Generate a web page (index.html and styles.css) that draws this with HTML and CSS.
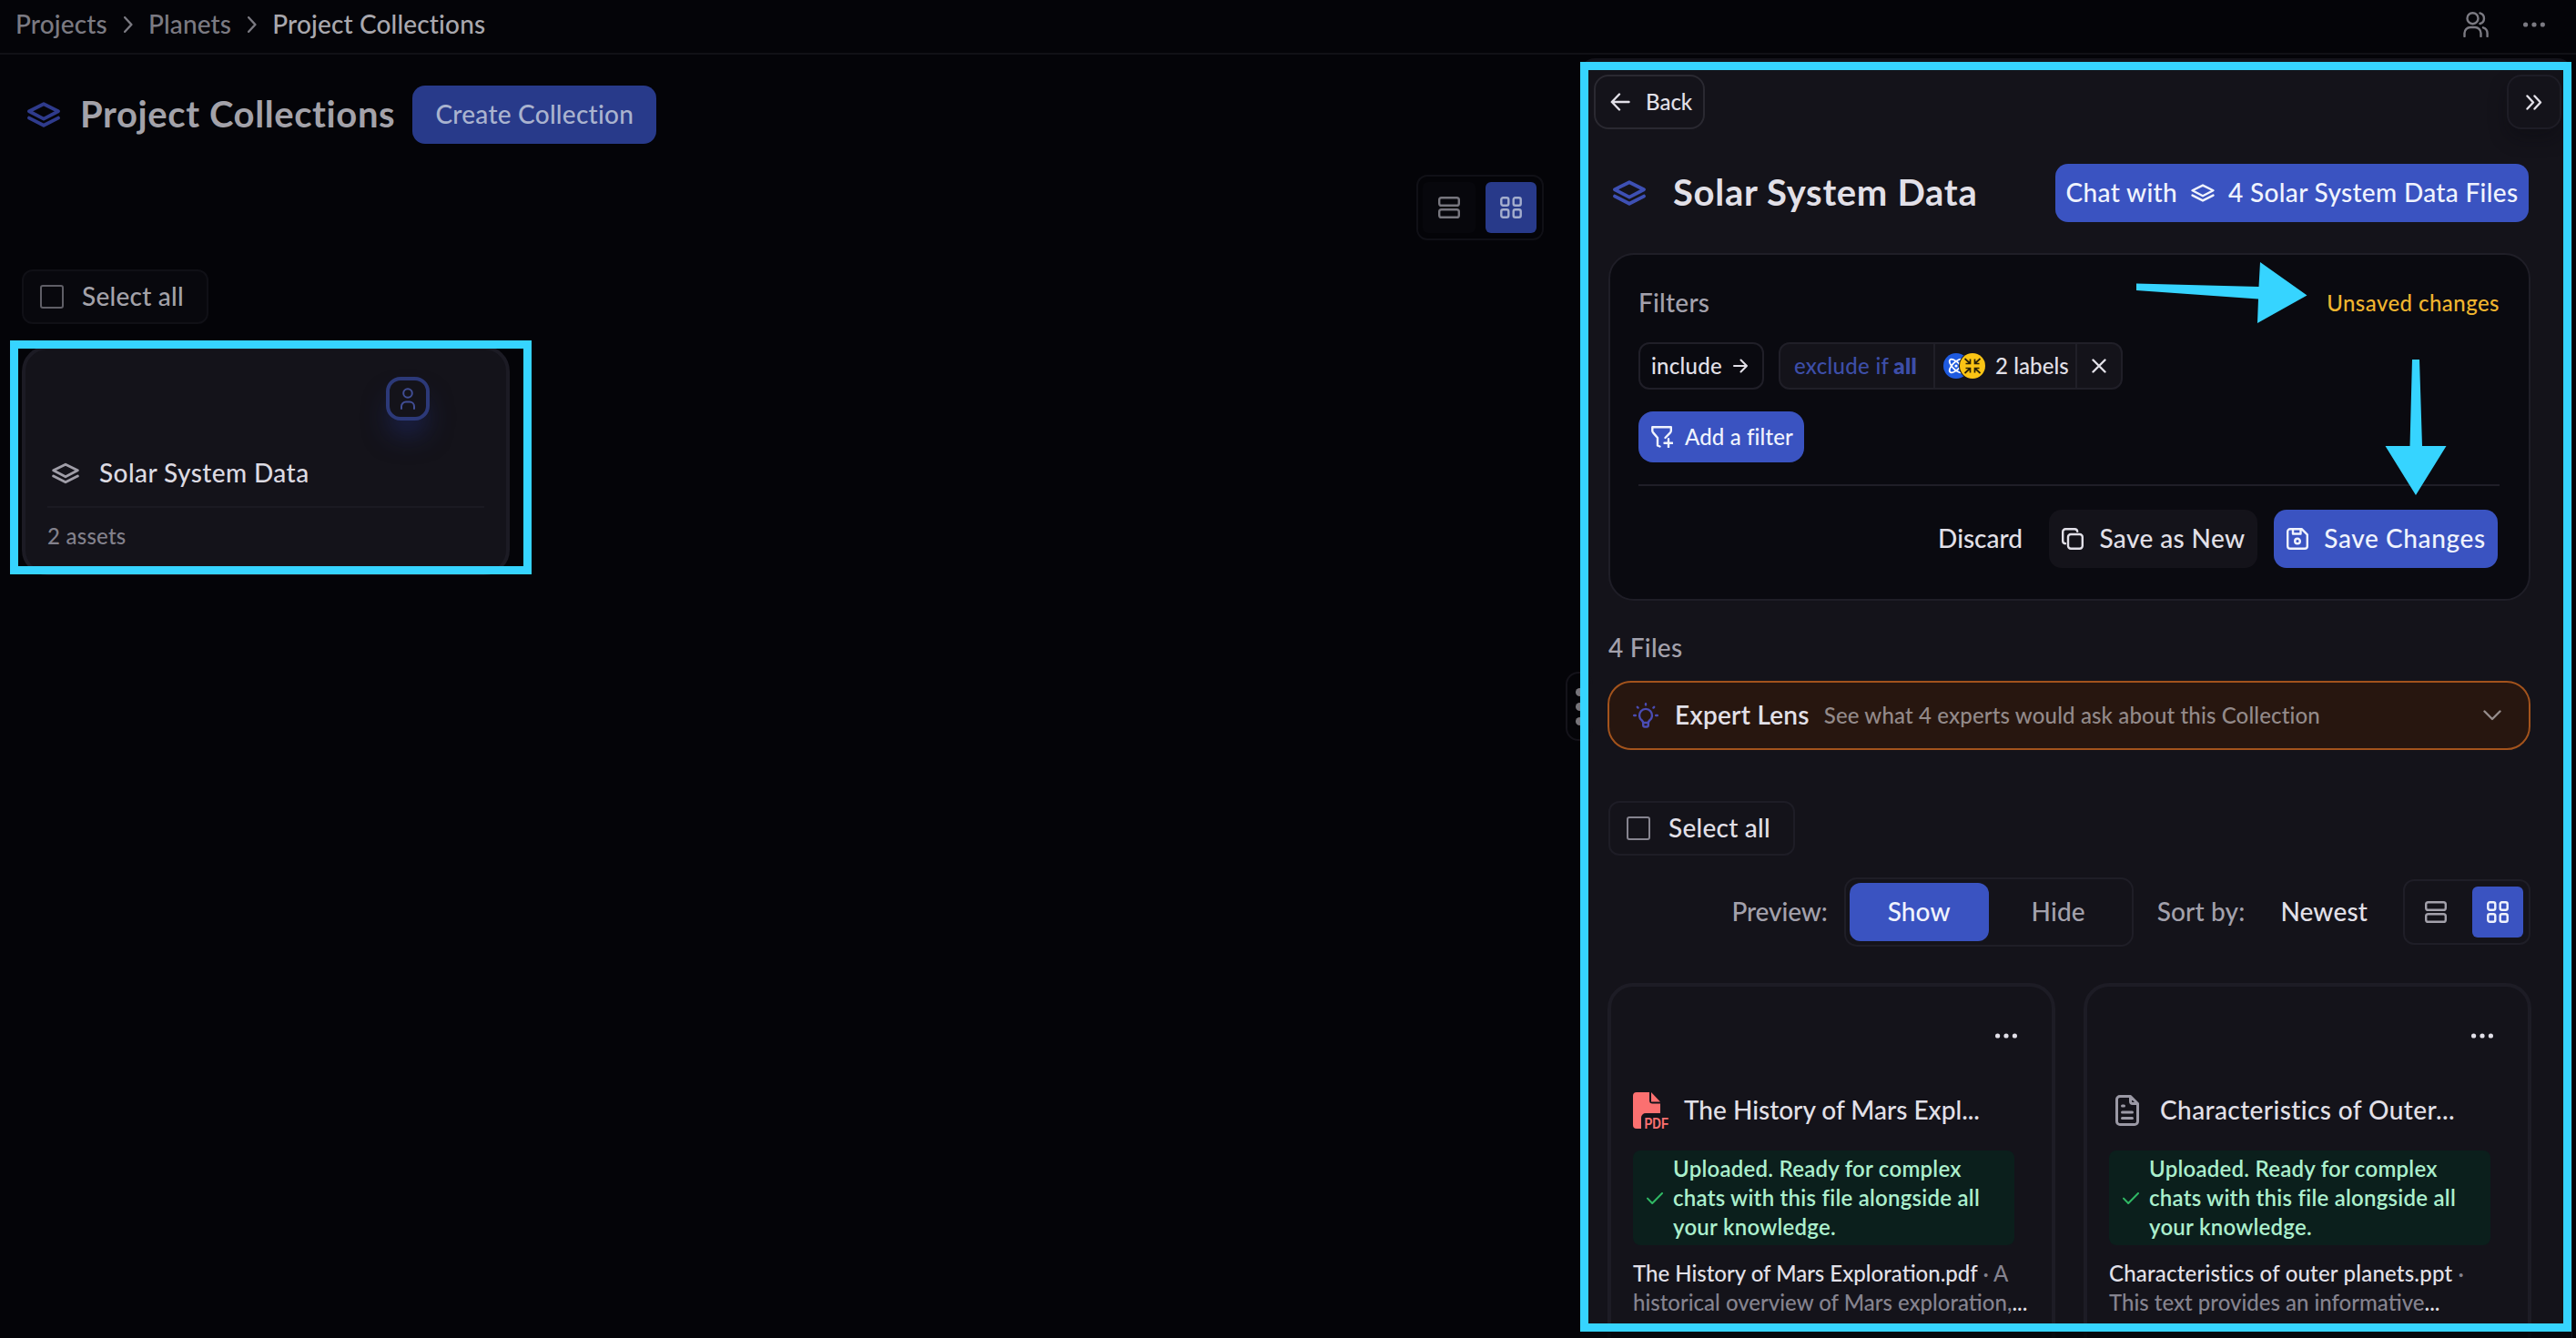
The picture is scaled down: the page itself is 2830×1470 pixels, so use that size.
FILE: index.html
```html
<!DOCTYPE html>
<html lang="en">
  <head>
    <meta charset="UTF-8" />
    <meta name="viewport" content="width=device-width, initial-scale=1.0" />
    <title>Project Collections</title>
    <link rel="stylesheet" href="styles.css">
  </head>
  <body>
    <!-- shared icons -->
    <svg class="sprite">
      <symbol id="layers" viewBox="0 0 36 28"><path d="M18 2.2 34 10.2 18 18.6 2 10.2z" /><path d="M2 17.6 18 25.8 34 17.6" /></symbol>
      <symbol id="rows" viewBox="0 0 24 24"><rect x="1.2" y="1.2" width="21.6" height="8.6" rx="2.4" /><rect x="1.2" y="14.2" width="21.6" height="8.6" rx="2.4" /></symbol>
      <symbol id="grid" viewBox="0 0 24 24"><rect x="1.3" y="1.3" width="8" height="8.4" rx="2" /><rect x="14.7" y="1.3" width="8" height="8.4" rx="2" /><rect x="1.3" y="14.3" width="8" height="8.4" rx="2" /><rect x="14.7" y="14.3" width="8" height="8.4" rx="2" /></symbol>
      <symbol id="dots" viewBox="0 0 24 6"><circle cx="2.6" cy="3" r="2.6" /><circle cx="12" cy="3" r="2.6" /><circle cx="21.4" cy="3" r="2.6" /></symbol>
      <symbol id="check" viewBox="0 0 18 13"><path d="M1 6.6 6.2 12 17 1" /></symbol>
      <symbol id="chevron" viewBox="0 0 10 18"><path d="M1.2 1.2 8.4 9 1.2 16.8" /></symbol>
    </svg>

    <header class="topbar">
      <nav class="crumbs">
        <span>Projects</span>
        <svg class="crumb-sep"><use href="#chevron" /></svg>
        <span>Planets</span>
        <svg class="crumb-sep"><use href="#chevron" /></svg>
        <span class="current">Project Collections</span>
      </nav>
      <svg class="icon users" viewBox="0 0 28 28"><circle cx="10.5" cy="7.2" r="6" /><path d="M1.5 27v-3.5a6.5 6.5 0 0 1 6.5-6.5h5a6.5 6.5 0 0 1 6.5 6.5V27M18.5 1.4a6 6 0 0 1 0 11.6M22 17.3a6.5 6.5 0 0 1 4.6 6.2V27" /></svg>
      <svg class="dots"><use href="#dots" /></svg>
    </header>

    <main class="content">
      <section class="collections">
        <div class="page-head">
          <svg class="icon layers-lg"><use href="#layers" /></svg>
          <h1>Project Collections</h1>
          <button class="btn create"><span>Create Collection</span></button>
        </div>
        <div class="view-toggle">
          <div class="view"><svg class="icon"><use href="#rows" /></svg></div>
          <div class="view active"><svg class="icon"><use href="#grid" /></svg></div>
        </div>
        <div class="select-all"><i class="checkbox"></i><span>Select all</span></div>
        <div class="collection-card">
          <div class="owner"><svg class="icon" viewBox="0 0 16 24"><circle cx="8" cy="6" r="4.8" /><path d="M1 23v-2.5a5 5 0 0 1 5-5h4a5 5 0 0 1 5 5V23" /></svg></div>
          <div class="collection-name"><svg class="icon"><use href="#layers" /></svg><span>Solar System Data</span></div>
          <div class="assets">2 assets</div>
        </div>
        <div class="drag-handle"><i></i><i></i><i></i></div>
      </section>

      <aside class="panel">
        <div class="panel-nav">
          <button class="back">
            <svg class="icon" viewBox="0 0 22 20"><path d="M20.5 10H2M10 1.5 1.8 10 10 18.5" /></svg>
            <span>Back</span>
          </button>
          <button class="collapse"><svg class="icon" viewBox="0 0 18 17"><path d="M1.5 1.5 8 8.5 1.5 15.5M9.5 1.5 16 8.5 9.5 15.5" /></svg></button>
        </div>

        <div class="panel-head">
          <svg class="icon layers-lg"><use href="#layers" /></svg>
          <h2>Solar System Data</h2>
          <button class="btn chat"><span>Chat with</span><svg class="icon"><use href="#layers" /></svg><span>4 Solar System Data Files</span></button>
        </div>

        <div class="filters">
          <div class="filters-head"><span class="label">Filters</span><span class="unsaved">Unsaved changes</span></div>
          <div class="chips">
            <div class="chip include"><span>include</span><svg class="icon" viewBox="0 0 16 16"><path d="M1 8h14M8.5 1.5 15 8 8.5 14.5" /></svg></div>
            <div class="chip exclude">
              <div class="rule"><span>exclude if</span> <b>all</b></div>
              <div class="labels">
                <svg class="badges" viewBox="0 0 46 28">
                  <circle cx="14" cy="14" r="14" fill="#1f5be0" />
                  <g fill="none" stroke="#fff" stroke-width="1.8"><ellipse cx="14" cy="14" rx="9.5" ry="4" transform="rotate(45 14 14)" /><ellipse cx="14" cy="14" rx="9.5" ry="4" transform="rotate(-45 14 14)" /></g>
                  <circle cx="14" cy="14" r="1.6" fill="#fff" />
                  <circle cx="32" cy="14" r="15" fill="#14131a" />
                  <circle cx="32" cy="14" r="14" fill="#fac415" />
                  <path d="M23.5 6l6 5.5M29.5 6.5v5h-5M40.5 6l-6 5.5M34.5 6.5v5h5M23.5 22l6-5.5M29.5 21.5v-5h-5M40.5 22l-6-5.5M34.5 21.5v-5h5" fill="none" stroke="#2a2208" stroke-width="1.7" />
                </svg>
                <span>2 labels</span>
              </div>
              <div class="remove"><svg class="icon" viewBox="0 0 16 16"><path d="M1.5 1.5l13 13M14.5 1.5l-13 13" /></svg></div>
            </div>
          </div>
          <button class="btn add-filter">
            <svg class="icon" viewBox="0 0 24 24"><path d="M9.5 22.5 7 21.5V13L2.2 7.4A3 3 0 0 1 1.3 5.3V1.3h20.5v3.9a3 3 0 0 1-.9 2.1L15.5 13M14.5 18.8h9M19 14.3v9" /></svg>
            <span>Add a filter</span>
          </button>
          <div class="filters-actions">
            <span class="discard">Discard</span>
            <button class="btn save-new">
              <svg class="icon" viewBox="0 0 24 24"><rect x="7" y="7" width="15.8" height="15.8" rx="3" /><path d="M4 17.2a3 3 0 0 1-2.8-3V4.2a3 3 0 0 1 3-3h10a3 3 0 0 1 3 2.6" /></svg>
              <span>Save as New</span>
            </button>
            <button class="btn save">
              <svg class="icon" viewBox="0 0 24 24"><path d="M4 1.2h12.6l6.2 6.2V20a2.8 2.8 0 0 1-2.8 2.8H4A2.8 2.8 0 0 1 1.2 20V4A2.8 2.8 0 0 1 4 1.2zM7 1.2V6.5h8.5V1.2" /><circle cx="12" cy="14.5" r="2.8" /></svg>
              <span>Save Changes</span>
            </button>
          </div>
        </div>

        <div class="file-count">4 Files</div>

        <div class="expert">
          <svg class="icon bulb" viewBox="0 0 28 28"><path d="M9.8 19.5a7 7 0 1 1 8.4 0c-1 .9-1.4 2-1.4 3.2v2.2a1.6 1.6 0 0 1-1.6 1.6h-2.4a1.6 1.6 0 0 1-1.6-1.6v-2.2c0-1.2-.4-2.3-1.4-3.2zM11 22h6" /><path d="M1.2 14h1.6M25.2 14h1.6M14 1.2v1.2M4.8 4.8l.8.8M23.2 4.8l-.8.8" /></svg>
          <span class="expert-name">Expert Lens</span>
          <span class="expert-hint">See what 4 experts would ask about this Collection</span>
          <svg class="icon down" viewBox="0 0 20 12"><path d="M1.5 1.5 10 10 18.5 1.5" /></svg>
        </div>

        <div class="select-all"><i class="checkbox"></i><span>Select all</span></div>

        <div class="toolbar">
          <span class="preview-label">Preview:</span>
          <div class="preview"><span class="on">Show</span><span>Hide</span></div>
          <span class="sort-label">Sort by:</span>
          <span class="sort">Newest</span>
          <div class="view-toggle">
            <div class="view"><svg class="icon"><use href="#rows" /></svg></div>
            <div class="view active"><svg class="icon"><use href="#grid" /></svg></div>
          </div>
        </div>

        <div class="files">
          <div class="file">
            <svg class="dots"><use href="#dots" /></svg>
            <div class="file-name mars">
              <svg class="pdf" viewBox="0 0 40 40">
                <path d="M4 0h14v9a3.5 3.5 0 0 0 3.5 3.5H30V23H14a5 5 0 0 0-5 5v12H4a4 4 0 0 1-4-4V4a4 4 0 0 1 4-4zM20 0l10 10.5h-10z" />
                <text x="12.5" y="39.5" textLength="26.5" lengthAdjust="spacingAndGlyphs">PDF</text>
              </svg>
              <span>The History of Mars Expl...</span>
            </div>
            <div class="status">
              <svg class="icon"><use href="#check" /></svg>
              <p>Uploaded. Ready for complex<br>chats with this file alongside all<br>your knowledge.</p>
            </div>
            <p class="about"><span>The History of Mars Exploration.pdf</span> <em>· A</em><br><em>historical overview of Mars exploration,</em>...</p>
          </div>
          <div class="file">
            <svg class="dots"><use href="#dots" /></svg>
            <div class="file-name">
              <svg class="icon doc" viewBox="0 0 26 34"><path d="M5 1.5h11.5l8 8V29a3.5 3.5 0 0 1-3.5 3.5H5A3.5 3.5 0 0 1 1.5 29V5A3.5 3.5 0 0 1 5 1.5zM16.5 1.5V7a2.5 2.5 0 0 0 2.5 2.5h5.5M7.5 12h2M7.5 19h11M7.5 25.5h11" /></svg>
              <span>Characteristics of Outer...</span>
            </div>
            <div class="status">
              <svg class="icon"><use href="#check" /></svg>
              <p>Uploaded. Ready for complex<br>chats with this file alongside all<br>your knowledge.</p>
            </div>
            <p class="about"><span class="wide">Characteristics of outer planets.ppt</span> <em>·</em><br><em>This text provides an informative</em>...</p>
          </div>
        </div>
      </aside>
    </main>

    <!-- callouts drawn over the page -->
    <div class="frame frame-card"></div>
    <div class="frame frame-panel"></div>
    <svg class="arrows" viewBox="0 0 2830 1470">
      <path d="M2347 311.5 2481.500 315 2483 288 2534.500 324.500 2480 355 2481 328.500 2347 319z" />
      <path d="M2650 395h8l3 95h26.5L2654 544l-33.500-54h27z" />
    </svg>
  </body>
</html>
```
FILE: styles.css
```css
* {
  box-sizing: border-box;
}
body {
  width: 2830px;
  height: 1470px;
  margin: 0;
  overflow: hidden;
  position: relative;
  background: #040408;
  color: #e2e0e8;
  font-family: Lato, "Open Sans", sans-serif;
  font-size: 28px;
  font-weight: 500;
  letter-spacing: 0.25px;
}
h1, h2, p {
  margin: 0;
}
button {
  font: inherit;
  letter-spacing: inherit;
  color: inherit;
  border: none;
  padding: 0;
  background: none;
}
em {
  font-style: normal;
}
svg {
  flex: none;
  display: block;
}
span, h1, h2, b {
  white-space: nowrap;
  padding-bottom: 2px;
}
.sprite {
  position: absolute;
  width: 0;
  height: 0;
}
.icon, .crumb-sep {
  fill: none;
  stroke: currentColor;
  stroke-width: 2.4;
  stroke-linecap: round;
  stroke-linejoin: round;
}
.dots {
  width: 24px;
  height: 6px;
  fill: currentColor;
}

/* top bar */
.topbar {
  height: 60px;
  display: flex;
  align-items: center;
  padding: 0 34px 4px 17px;
  border-bottom: 2px solid #111116;
  color: #7b7a82;
}
.crumbs {
  display: flex;
  align-items: center;
  margin-right: auto;
  letter-spacing: 0.15px;
}
.crumb-sep {
  width: 10px;
  height: 18px;
  margin: 0 17px 0 18px;
}
.current {
  color: #a9a8ae;
}
.users {
  width: 28px;
  height: 28px;
  margin-right: 38px;
}

/* left side */
.content {
  display: flex;
  height: 1410px;
}
.collections {
  width: 1736px;
  padding: 34px 40px 0 24px;
  position: relative;
  color: #a3a2a9;
}
.page-head {
  display: flex;
  align-items: center;
  height: 64px;
}
.layers-lg {
  width: 36px;
  height: 28px;
  color: #2f3b8c;
  stroke-width: 3.8;
}
.page-head .layers-lg {
  margin: 0 22px 0 6px;
}
h1, h2 {
  font-size: 40px;
  font-weight: 700;
  letter-spacing: 0.6px;
}
.btn {
  height: 64px;
  display: flex;
  align-items: center;
  justify-content: center;
  border-radius: 14px;
  background: #3a53c1;
  color: #f0f3fd;
}
.create {
  width: 268px;
  margin-left: 19px;
  background: #283a8a;
  color: #aab3cf;
}
.view-toggle {
  width: 140px;
  height: 72px;
  display: flex;
  align-items: center;
  justify-content: space-between;
  padding: 0 6px 0 5px;
  border: 2px solid #1f1e27;
  border-radius: 12px;
}
.view {
  width: 58px;
  height: 56px;
  display: flex;
  align-items: center;
  justify-content: center;
  border-radius: 6px;
  color: #a3a1ab;
}
.view .icon {
  width: 24px;
  height: 24px;
}
.view.active {
  width: 56px;
  background: #3a53c1;
  color: #f0f3fd;
}
.collections .view-toggle {
  margin: 34px 0 0 auto;
  border-color: #101016;
}
.collections .view {
  background: #07070c;
  color: #77767e;
}
.collections .view.active {
  background: #283a8a;
  color: #a4aecd;
}
.select-all {
  width: 205px;
  height: 60px;
  display: flex;
  align-items: center;
  padding-left: 18px;
  border: 2px solid #1e1d26;
  border-radius: 12px;
}
.checkbox {
  width: 26px;
  height: 26px;
  margin-right: 20px;
  border: 2.5px solid #86848f;
  border-radius: 3px;
}
.collections .select-all {
  margin-top: 32px;
  background: #08080d;
  border-color: #101016;
}
.collections .checkbox {
  border-color: #5f5e66;
}
.collection-card {
  width: 536px;
  height: 252px;
  margin-top: 24px;
  padding: 30px 24px 0;
  border: 4px solid #1c1b24;
  border-radius: 28px;
  background: #14131a;
  color: #dcdae2;
}
.owner {
  width: 48px;
  height: 48px;
  margin-left: 372px;
  display: flex;
  align-items: center;
  justify-content: center;
  border: 4px solid #2c3978;
  border-radius: 16px;
  background: #14131a;
  color: #414e95;
  box-shadow: 0 20px 30px -6px rgba(34, 50, 130, 0.55);
}
.owner .icon {
  width: 16px;
  height: 24px;
  stroke-width: 2;
}
.collection-name {
  height: 96px;
  display: flex;
  align-items: center;
  padding: 21px 0 0 5px;
  border-bottom: 2px solid #1b1a22;
  letter-spacing: 0.42px;
}
.collection-name .icon {
  width: 30px;
  height: 24px;
  margin-right: 22px;
  color: #a09ea8;
  stroke-width: 3.4;
}
.assets {
  margin-top: 16px;
  font-size: 24px;
  color: #83818c;
}
.drag-handle {
  position: absolute;
  left: 1720px;
  top: 678px;
  width: 30px;
  height: 76px;
  display: flex;
  flex-direction: column;
  align-items: center;
  justify-content: center;
  gap: 7px;
  border: 2px solid #14131a;
  border-radius: 14px;
}
.drag-handle i {
  width: 9px;
  height: 9px;
  border-radius: 50%;
  background: #77767c;
}

/* side panel */
.panel {
  width: 1090px;
  height: 1406px;
  margin-top: 4px;
  padding: 18px 46px 0 31px;
  overflow: hidden;
  background: #14131a;
  border-radius: 16px 16px 0 0;
}
.panel-nav {
  display: flex;
  justify-content: space-between;
  margin: 0 -34px 0 -16px;
  font-size: 24px;
}
.back, .collapse {
  height: 60px;
  display: flex;
  align-items: center;
  border: 2px solid #2a2931;
  border-radius: 16px;
}
.back {
  width: 122px;
  padding-left: 16px;
  letter-spacing: 0;
}
.back .icon {
  width: 22px;
  height: 20px;
  margin-right: 17px;
}
.collapse {
  width: 60px;
  justify-content: center;
  border-color: #1e1d26;
  box-shadow: 0 10px 20px rgba(8, 8, 14, 0.35);
}
.collapse .icon {
  width: 18px;
  height: 17px;
}
.panel-head {
  display: flex;
  align-items: center;
  margin-top: 38px;
}
.panel-head .layers-lg {
  margin: 0 30px 0 5px;
  color: #3e50b4;
}
.panel-head h2 {
  letter-spacing: 0.7px;
}
.chat {
  width: 520px;
  margin: 0 2px 0 auto;
  letter-spacing: 0.33px;
}
.chat .icon {
  width: 26px;
  height: 20px;
  margin: 0 15px;
  stroke-width: 3.4;
}
.filters {
  height: 382px;
  margin-top: 34px;
  padding: 36px 32px 0 31px;
  border: 2px solid #1f1e27;
  border-radius: 28px;
  background: #0a0a10;
}
.filters-head {
  height: 34px;
  display: flex;
  align-items: center;
  justify-content: space-between;
}
.label, .file-count {
  color: #a3a1ac;
}
.unsaved {
  font-size: 24px;
  color: #f0b52f;
  letter-spacing: 0.45px;
}
.chips {
  display: flex;
  gap: 16px;
  margin-top: 26px;
  font-size: 24px;
}
.chip {
  height: 52px;
  display: flex;
  align-items: center;
  border: 2px solid #201f28;
  border-radius: 12px;
}
.chip .icon {
  width: 16px;
  height: 16px;
  stroke-width: 2;
}
.include {
  width: 138px;
  padding: 0 16px 0 12px;
  justify-content: space-between;
}
.exclude {
  background: #14131a;
}
.exclude > div {
  height: 100%;
  display: flex;
  align-items: center;
}
.rule {
  width: 168px;
  padding-left: 15px;
  gap: 5px;
  color: #3d4ea8;
  letter-spacing: 0.3px;
}
.rule b {
  font-weight: 800;
}
.labels {
  width: 158px;
  padding-left: 9px;
  border: 2px solid #201f28;
  border-width: 0 2px;
  letter-spacing: 0.1px;
}
.badges {
  width: 46px;
  height: 28px;
  margin-right: 11px;
}
.remove {
  width: 48px;
  justify-content: center;
}
.chip .remove .icon {
  stroke-width: 2.4;
}
.add-filter {
  width: 182px;
  height: 56px;
  margin-top: 24px;
  padding-left: 2px;
  font-size: 24px;
  border-radius: 16px;
  gap: 13px;
  letter-spacing: 0.15px;
}
.add-filter .icon, .save .icon, .save-new .icon {
  width: 24px;
  height: 24px;
}
.filters-actions {
  display: flex;
  justify-content: flex-end;
  align-items: center;
  margin-top: 24px;
  padding: 26px 2px 0 0;
  border-top: 2px solid #1f1e27;
}
.discard {
  margin-right: 29px;
  letter-spacing: 0;
}
.save-new, .save {
  gap: 17px;
  padding-left: 1px;
}
.save-new {
  width: 229px;
  margin-right: 18px;
  background: #14131a;
  color: #e2e0e8;
  letter-spacing: 0.4px;
}
.save {
  width: 246px;
  letter-spacing: 0.6px;
}
.file-count {
  height: 34px;
  margin-top: 34px;
}
.expert {
  width: 1014px;
  height: 76px;
  display: flex;
  align-items: center;
  margin: 20px 0 0 -1px;
  padding: 0 30px 0 26px;
  border: 2px solid #a3531c;
  border-radius: 26px;
  background: #27160f;
}
.bulb {
  width: 28px;
  height: 28px;
  margin-right: 18px;
  color: #4a4cb4;
}
.expert-name {
  margin-right: 16px;
  font-weight: 600;
}
.expert-hint {
  font-size: 24px;
  color: #938a8a;
  letter-spacing: 0.15px;
}
.down {
  width: 20px;
  height: 12px;
  margin-left: auto;
  color: #968d8c;
}
.panel .select-all {
  margin-top: 56px;
}
.toolbar {
  display: flex;
  align-items: center;
  justify-content: flex-end;
  margin-top: 24px;
  color: #a3a1ac;
  letter-spacing: 0.15px;
}
.preview {
  width: 318px;
  height: 76px;
  display: flex;
  align-items: center;
  margin: 0 26px 0 18px;
  padding: 0 4px;
  border: 2px solid #1f1e27;
  border-radius: 14px;
}
.preview span {
  width: 154px;
  height: 64px;
  display: flex;
  align-items: center;
  justify-content: center;
  border-radius: 12px;
}
.preview .on {
  background: #3a53c1;
  color: #f0f3fd;
}
.preview-label {
  letter-spacing: -0.1px;
}
.sort {
  margin: 0 39px;
  color: #e2e0e8;
}

/* file cards */
.files {
  display: grid;
  grid-template-columns: 492px 492px;
  gap: 31px;
  margin: 40px 0 0 -1px;
}
.file {
  height: 460px;
  padding: 51px 24px 0;
  border: 4px solid #1d1c25;
  border-radius: 28px;
}
.file .dots {
  margin-left: auto;
  margin-right: 14px;
}
.file-name {
  height: 80px;
  margin-top: 39px;
  display: flex;
  align-items: center;
  letter-spacing: 0.4px;
}
.file-name.mars {
  letter-spacing: 0;
}
.pdf {
  width: 40px;
  height: 40px;
  margin-right: 16px;
  overflow: visible;
  fill: #fb7070;
}
.pdf text {
  font: 700 16px "Liberation Sans", sans-serif;
}
.doc {
  width: 26px;
  height: 34px;
  margin: 0 23px 0 7px;
  color: #9b99a5;
  stroke-width: 3;
}
.status {
  width: 419px;
  height: 104px;
  margin-top: 4px;
  display: flex;
  align-items: center;
  padding-left: 15px;
  border-radius: 8px;
  background: #0b1f1c;
  color: #abefcd;
  font-size: 24px;
  font-weight: 600;
  line-height: 32px;
}
.status .icon {
  width: 18px;
  height: 13px;
  margin-right: 11px;
  color: #30b864;
  stroke-width: 2;
}
.about {
  margin-top: 15px;
  font-size: 24px;
  line-height: 32px;
  letter-spacing: 0;
  white-space: nowrap;
}
.about .wide {
  letter-spacing: 0.2px;
}
.about em {
  color: #85838f;
}

/* callouts */
.frame {
  position: absolute;
  border: 9px solid #36d4ff;
}
.frame-card {
  left: 11px;
  top: 374px;
  width: 573px;
  height: 257px;
}
.frame-panel {
  left: 1736px;
  top: 68px;
  width: 1089px;
  height: 1395px;
  box-shadow: 0 7px 0 rgba(2, 6, 10, 0.75);
}
.arrows {
  position: absolute;
  left: 0;
  top: 0;
  width: 2830px;
  height: 1470px;
  fill: #36d4ff;
}
```
